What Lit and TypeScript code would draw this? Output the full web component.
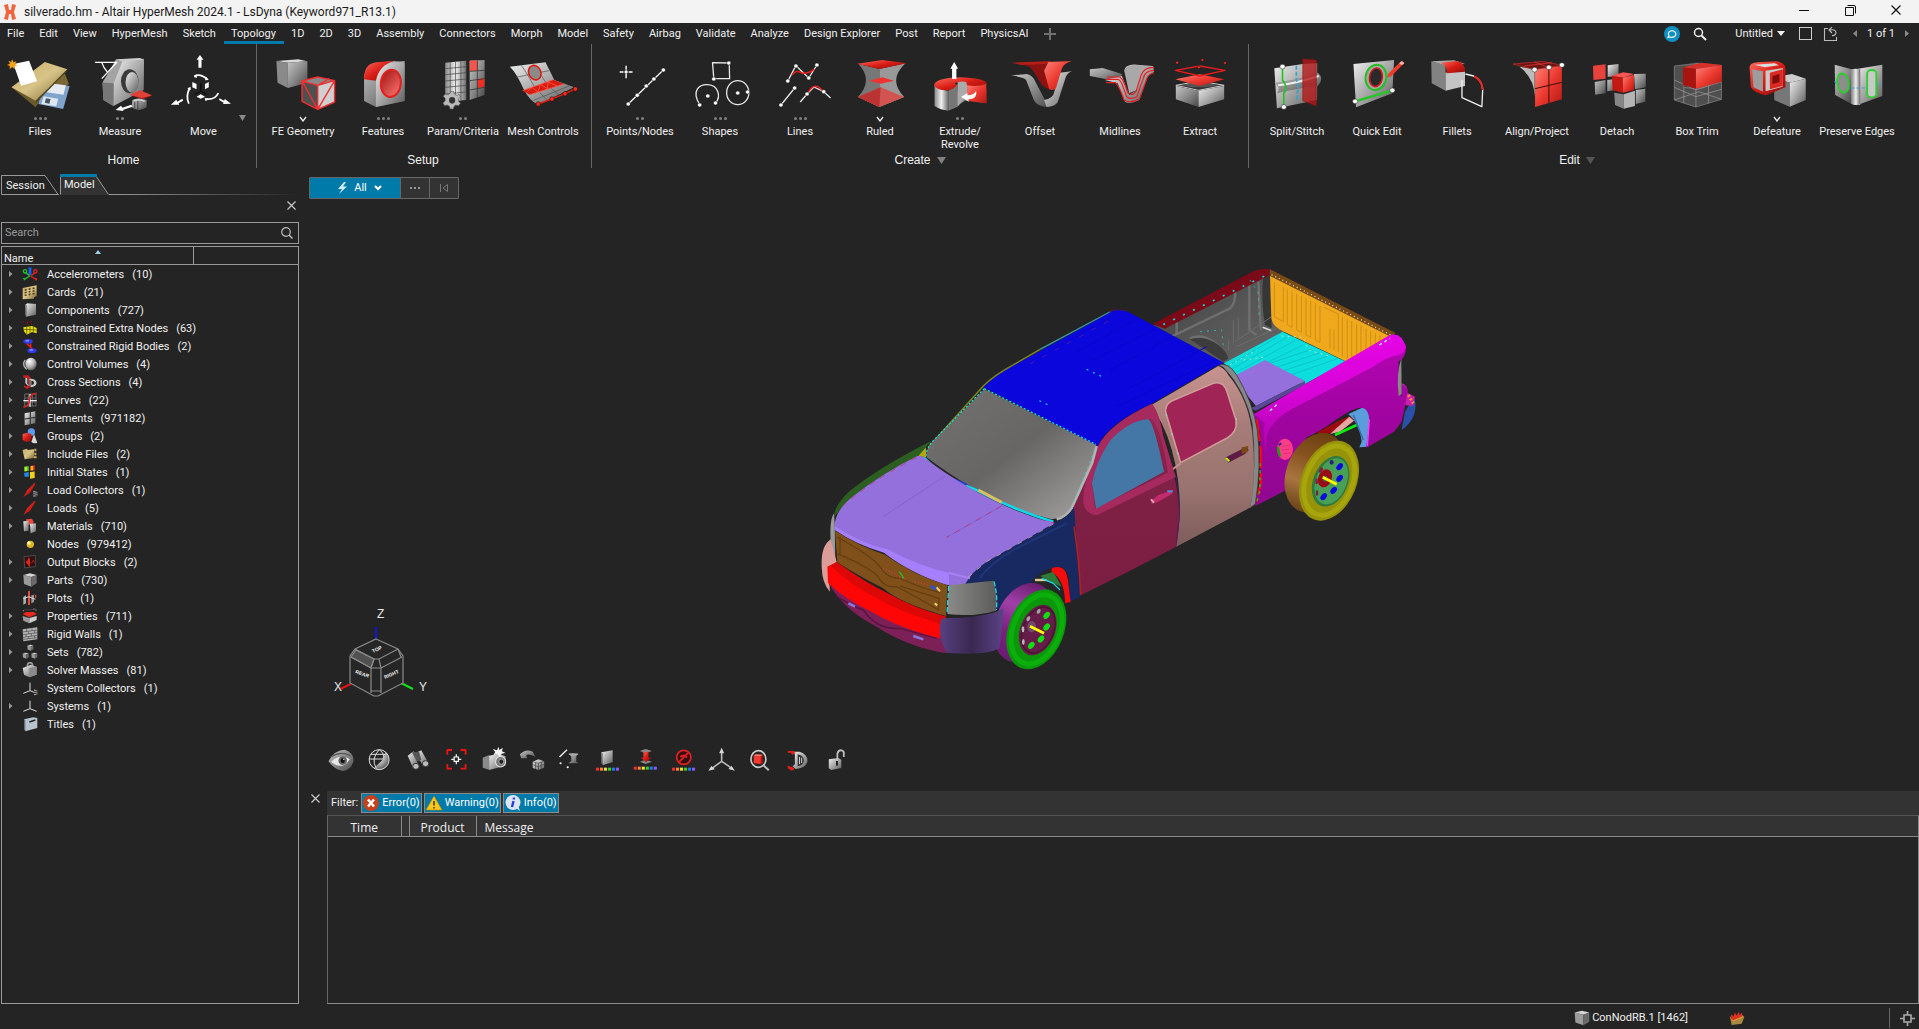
import { LitElement, html, svg, css } from "lit";
import { customElement, state } from "lit/decorators.js";
import { classMap } from "lit/directives/class-map.js";

/* ---------- small drawing helpers ---------- */
const P = (d: string, fill = "none", stroke = "none", w = 1) =>
  svg`<path d=${d} fill=${fill} stroke=${stroke} stroke-width=${w} stroke-linejoin="round" vector-effect="non-scaling-stroke"/>`;
const E = (cx: number, cy: number, rx: number, ry: number, fill = "none", stroke = "none", w = 1, rot = 0) =>
  svg`<ellipse cx=${cx} cy=${cy} rx=${rx} ry=${ry} fill=${fill} stroke=${stroke} stroke-width=${w} transform=${`rotate(${rot} ${cx} ${cy})`} vector-effect="non-scaling-stroke"/>`;
const R = (x: number, y: number, w: number, h: number, fill: string) =>
  svg`<rect x=${x} y=${y} width=${w} height=${h} fill=${fill}/>`;
const D = (d: string, stroke: string, w: number, dash: string) =>
  svg`<path d=${d} fill="none" stroke=${stroke} stroke-width=${w} stroke-dasharray=${dash} vector-effect="non-scaling-stroke"/>`;
const dots = (pts: number[][], rx = 5.5, ry = 6.5, fill = "#fff") => pts.map(([x, y]) => E(x, y, rx, ry, fill, "#111", 0.5));

const G = "url(#metal)", GV = "url(#metalV)", GD = "url(#metalD)", RD = "url(#red)", RL = "url(#redL)", TAN = "url(#tan)", SPH = "url(#sphere)";

/* ---------- ribbon artwork ---------- */
type Tool = { label: string[]; hint?: "2" | "3" | "v"; vb: string; art: unknown };

const home: Tool[] = [
  { label: ["Files"], hint: "3", vb: "0 156 209 180", art: [
    P("M30 262L50 253L105 300L93 322Z", "#6b5a2c"),
    P("M120 232L170 222L180 252L150 275Z", "#7a6834"),
    P("M118 248L182 258L165 327L100 312Z", "#7fa3cc"), P("M128 250L172 256L166 284L122 277Z", "#e6ebf2"),
    P("M114 289L152 296L147 319L108 312Z", "#dfe6ee"), P("M120 295L132 297L129 311L117 308Z", "#456"),
    P("M30 262L117 186L176 208L93 302Z", TAN), P("M93 302L176 208L173 216L94 309Z", "#544520"),
    P("M35 192L76 182L97 244L55 257Z", "#fff"),
    P("M32 178L35 187L43 184L39 192L46 197L38 198L38 208L32 201L25 208L26 198L18 195L26 191L22 182L29 186Z", "#f5a314")] },
  { label: ["Measure"], hint: "2", vb: "209 156 209 180", art: [
    P("M268 250L303 178L376 176L375 270L296 318L270 300Z", GD),
    P("M296 318L297 249L318 184L376 179L375 270Z", G),
    P("M268 247L297 250L296 318L270 300Z", "#777"), P("M268 247L306 178L320 184L297 250Z", "#a4a4a4"), P("M306 178L365 174L376 179L320 185Z", "#ccc"),
    E(339, 244, 23, 36, "#3a3a3a"), E(345, 247, 17, 31, G),
    P("M248 187H305L266 236M266 188Q271 205 280 215", "none", "#fff", 1.3),
    P("M340 284L366 271L397 287L372 298Z", RD), P("M340 284L366 271L397 286L372 294Z", "#e0403a"),
    P("M346 300Q360 291 383 300V322Q362 338 344 322Z", GD), P("M352 304V326M360 302V330", "none", "#333", 0.8), P("M350 303Q362 296 378 304", "none", "#ddd", 1.4),
    P("M302 330L316 317L320 323L343 314L346 320L322 329L322 333Z", "#fff")] },
  { label: ["Move"], vb: "426 156 209 180", art: [
    P("M520 165L529 179H524V203H516V179H511Z", "#fff"),
    P("M444 314L458 299L461 305L474 296L476 302L464 310L466 314Z", "#fff"), P("M601 311L585 297L583 302L571 295L570 300L582 308L580 312Z", "#fff"),
    P("M505 229Q520 219 538 237M491 311Q482 290 493 264M536 297Q560 300 568 279", "none", "#fff", 1.8),
    P("M511 223L504 231L512 234ZM536 230L543 240L533 241ZM487 266L495 260L496 270ZM532 292L540 300L534 303Z", "#fff"),
    P("M500 246L511 252V268L500 262ZM543 246L533 252V268L543 262ZM511 290L522 283L533 290L522 296Z", "#fff"),
    P("M522 250V273L507 283M522 273L537 283", "none", "#111", 1.4)] },
];
const setup: Tool[] = [
  { label: ["FE Geometry"], hint: "v", vb: "687 156 209 180", art: [
    P("M722 183L779 178L803 184L752 188Z", "#d8d8d8"), P("M722 183L752 188V264L725 248Z", "#8a8a8a"), P("M752 188L803 184V248L752 264Z", GD),
    P("M789 243L830 231L874 242L830 256Z", "#888"), P("M789 243L830 256V328L789 304Z", "#4f4f4f"), P("M830 256L874 242V306L830 328Z", "#d0d0d0"),
    P("M789 243L830 231L874 242L830 256ZM789 243V304L830 328L874 306V242M830 256V328L789 243M830 328L874 242M830 256L860 236", "none", "#f03030", 1.4)] },
  { label: ["Features"], hint: "3", vb: "896 156 209 180", art: [
    P("M951 230Q957 190 985 188L1030 183Q1057 185 1057 195V303L982 321L951 303Z", GD),
    P("M982 321V240Q985 200 1020 188L1057 183V303Z", G),
    P("M951 238Q950 190 985 187L1030 182Q990 195 982 242Z", RD),
    E(1021, 250, 26, 41, "url(#redHole)", "#e02020", 2, 4)] },
  { label: ["Param/Criteria"], hint: "2", vb: "1105 156 209 180", art: [
    P("M1163 188L1218 182V300L1163 306Z", GV), P("M1163 206L1218 200M1163 224L1218 218M1163 243L1218 237M1163 262L1218 256M1163 282L1218 276M1176 187V305M1190 185V303M1204 184V302", "none", "#444", 0.7),
    P("M1227 182L1266 180V285L1227 300Z", GD), P("M1227 182L1248 181V212L1227 214Z", "#f2564e"), P("M1247 238L1265 234V260L1247 264Z", "#ef2f22"),
    P("M1227 214L1266 211M1227 242L1266 236M1227 270L1266 262M1247 181V292", "none", "#333", 0.8),
    P("M1178 275L1186 275L1187 282L1194 286L1199 283L1203 291L1198 296V304L1203 310L1197 317L1190 315L1186 320L1184 327H1176L1174 319L1168 315L1162 317L1157 309L1163 303V295L1158 289L1163 282L1170 284L1175 281Z", "#b9b9b9", "#555", 0.6),
    E(1181, 301, 8, 10, "#333")] },
  { label: ["Mesh Controls"], vb: "1314 156 209 180", art: [
    P("M1332 200L1425 187Q1436 212 1448 240L1500 262L1405 314Q1385 305 1368 268Q1350 220 1332 200Z", G),
    P("M1365 272L1445 239L1474 252L1384 284Z", "#d81c10"), P("M1365 272L1445 239M1384 284L1474 252M1375 278L1390 262L1405 276L1412 253L1430 266L1432 246L1455 258", "none", "#ff5a4a", 0.8),
    P("M1348 232L1434 212M1362 196Q1380 225 1396 260M1393 190L1425 246M1394 301L1486 258M1410 278L1430 300M1440 266L1462 286", "none", "#555", 0.7),
    E(1397, 218, 16, 22, "#8a8a8a", "#e01b12", 1.6, -15),
    P("M1406 312L1442 297L1476 281L1503 267", "none", "#e01b12", 1.4), dots([[1406, 312], [1442, 297], [1476, 281], [1503, 267]], 6, 7, "#f22a18")] },
];
const create: Tool[] = [
  { label: ["Points/Nodes"], hint: "2", vb: "23 156 187 180", art: [
    P("M89 312L171 210", "none", "#fff", 1.2), dots([[89, 312], [110, 286], [131, 258], [149, 237], [171, 210]], 5, 6),
    P("M84 197V209M84 222V235M69 216H78M90 216H99", "none", "#fff", 1.4), E(84, 216, 4, 5, "#fff")] },
  { label: ["Shapes"], hint: "3", vb: "211 156 187 180", art: [
    P("M287 188L326 189L327 236H290ZM257 314C236 270 258 252 276 254C300 256 308 288 294 309", "none", "#e8e8e8", 1.3),
    E(346, 278, 26, 36, "none", "#e8e8e8", 1.3), dots([[325, 189], [290, 237], [276, 288], [257, 315], [294, 309], [346, 279], [369, 276]], 5, 6)] },
  { label: ["Lines"], hint: "3", vb: "398 156 187 180", art: [
    P("M463 243L482 197L512 234L531 195M447 315L479 264M492 306L508 282L524 261L547 275L563 294", "none", "#e8e8e8", 1.3),
    P("M473 225Q482 207 497 220Q515 220 525 207M511 276Q526 242 547 275", "none", "#e81c1c", 1.5),
    dots([[463, 243], [482, 198], [512, 234], [531, 195], [447, 315], [479, 264], [508, 282], [547, 275]], 5, 6)] },
  { label: ["Ruled"], hint: "v", vb: "585 156 187 180", art: [
    P("M628 192Q664 240 627 291L677 321V207Z", "#777"), P("M738 190Q696 240 735 291L677 321V207Z", "#999"),
    P("M653 242L684 232L711 242L680 251Z", "#e33"), P("M627 291L680 262L735 291L677 321Z", "#d25450"), P("M627 291L680 262L677 321Z", "#b33"),
    P("M625 191L684 180L741 190L677 207Z", RD)] },
  { label: ["Extrude/", "Revolve"], hint: "2", vb: "772 156 187 180", art: [
    P("M848 326V285L880 252V300L848 326Z", "#8a8a8a"), P("M880 285L927 268V310L880 302Z", "#e33a34"),
    P("M806 254V318Q820 330 838 332V272Q815 268 806 254Z", GV), P("M838 272V332L860 320V252Z", "#777"), P("M882 252L927 250V310L882 300Z", RL), P("M860 240H882V285L860 320Z", "#aaa"),
    P("M805 254Q810 235 862 232Q927 234 928 252Q905 262 882 256L880 246Q866 242 853 250L858 256Q850 272 830 271Q808 268 805 254Z", RD),
    P("M852 186L861 206H857V237H847V206H843Z", "#fff"), P("M868 291L883 279V286Q900 284 903 272Q908 296 885 298L886 305Z", "#fff")] },
  { label: ["Offset"], vb: "959 156 187 180", art: [
    P("M985 226L1022 222Q1036 226 1042 246L1064 300L1084 296L1068 321Q1045 318 1038 300L1020 240Q1016 232 985 226Z", GD),
    P("M1127 214L1098 218L1086 275Q1083 296 1062 300L1068 321Q1088 320 1094 306L1112 235Q1116 218 1127 214Z", G),
    P("M1004 192L1072 186L1062 212L1076 268Q1058 262 1052 245L1036 212Q1030 196 1004 192Z", "#8c1210"), P("M986 188L1080 183L1066 192L1010 195Z", "#b81c18"),
    P("M1072 186L1127 183Q1106 190 1102 212L1090 264Q1085 273 1074 268L1062 212Z", RL)] },
  { label: ["Midlines"], vb: "1147 156 187 180", art: [
    P("M1170 208L1200 204L1245 222L1240 245L1170 228Z", GD), P("M1252 205Q1260 192 1280 194L1318 198L1320 216Q1305 222 1300 250L1286 300Q1262 315 1252 305L1235 250L1205 240L1245 228L1262 285L1280 270Z", G),
    P("M1250 210Q1258 194 1284 195L1310 200Q1296 206 1290 225L1280 270L1262 280Z", "#a8a8a8"),
    P("M1208 238H1235Q1243 240 1248 262L1256 290Q1262 300 1280 290L1295 235Q1298 212 1320 211M1208 248H1230Q1240 262 1250 300Q1264 312 1286 296L1302 240Q1305 222 1320 219M1210 231H1240Q1250 240 1258 278Q1270 290 1278 274L1290 225Q1296 202 1320 202", "none", "#ec1c1c", 1.1)] },
  { label: ["Extract"], vb: "1334 156 187 180", art: [
    P("M1371 256L1427 243L1484 256L1424 271Z", "#333", "#ccc", 1), P("M1371 258L1424 272V321L1371 298Z", GD), P("M1484 258L1424 272V321L1484 298Z", G), P("M1380 256L1427 246L1474 256L1440 262H1410Z", "#555"),
    P("M1370 238L1427 223L1484 238L1427 258Z", RL), P("M1370 211L1427 198L1486 211L1427 228Z", "none", "#e81c1c", 1.4),
    dots([[1374, 188], [1433, 180], [1486, 189], [1425, 202]], 3.5, 4, "#ff3030")] },
];
const edit: Tool[] = [
  { label: ["Split/Stitch"], vb: "39 156 185 180", art: [
    P("M79 205L145 192L178 190V300L85 325Z", G), P("M79 248Q125 242 180 218Q195 235 180 258Q130 265 85 280Q95 262 79 248Z", GD), P("M88 256Q130 250 182 228", "none", "#eee", 2),
    P("M145 177L176 180V318L145 302Z", "#b81818c8", "#8d1010", 0.6),
    P("M98 200V240Q112 262 101 280V320", "none", "#1fc41f", 1.6), D("M130 197V240Q138 262 131 280V305", "#2aa5d8", 1.6, "4 2"), dots([[98, 200], [101, 321]], 6, 7)] },
  { label: ["Quick Edit"], vb: "224 156 185 180", art: [
    P("M262 192L356 180L352 280L268 322Z", G), E(314, 232, 24, 38, "#a8a8a8", "#22c022", 2, 5), E(314, 232, 15, 28, "#2a2a2a", "#d81c1c", 1.6, 5),
    P("M266 304L352 271", "none", "#22c822", 2.4), dots([[266, 304], [352, 271]], 6, 7), P("M342 222L372 184L379 190L350 228L340 233Z", "#ee3b2b"), P("M368 190L374 183L380 189L374 196Z", "#ffb3a8")] },
  { label: ["Fillets"], vb: "409 156 185 180", art: [
    P("M442 184L495 181L520 192L470 196Z", "#aaa"), P("M442 184L475 195V272L443 250Z", "#828282"), P("M475 218L520 212V258L475 272Z", "#c4c4c4"),
    P("M464 188L500 183Q522 188 520 215L478 220Q478 195 464 188Z", RD), P("M521 222L540 228Q558 238 561 268L559 320L513 293V240", "none", "#f0f0f0", 1.3), P("M541 229Q560 240 561 270", "none", "#e22", 2)] },
  { label: ["Align/Project"], vb: "593 156 185 180", art: [
    P("M645 200L680 208V290Q680 235 645 200Z", "#bbb"), P("M630 192L700 184L743 196L681 209Z", "#6c1414", "#d33", 0.6), P("M655 198L720 188M680 186L712 202", "none", "#f44", 0.6),
    P("M681 209L743 197V298L681 321Z", RL), P("M713 203V309M681 266L743 247", "none", "#3c0c0c", 1), dots([[680, 209], [713, 202], [743, 195]], 6, 7)] },
  { label: ["Detach"], vb: "778 156 185 180", art: [
    P("M815 197L844 193V236L816 240Z", "#e8423c"), P("M849 196L874 192V230H849Z", G), P("M819 246L844 240V280L820 284Z", GD), P("M848 240L870 236V270L848 274Z", GD),
    P("M859 227L885 217L910 222L884 233Z", "#f55"), P("M859 227L884 233V278L860 270Z", "#c41812"), P("M884 233L910 224V270L884 278Z", RL),
    P("M910 222L937 221V262L912 268Z", GD), P("M864 278L886 283V326L866 315Z", "#868686"), P("M886 283L912 272V318L886 326Z", "#b5b5b5"), P("M914 270L936 266V305L914 312Z", GD)] },
  { label: ["Box Trim"], vb: "963 156 185 180", art: [
    P("M1003 198L1053 187L1112 194V298L1053 321L1003 300Z", "#55555580"),
    P("M1003 198L1060 190L1025 205V262L1053 266L1112 245V298L1053 321L1003 300Z", "#6e6e6e60", "#888", 0.7), P("M1003 240L1053 270L1112 245M1025 262V310M1053 266V321M1003 300L1060 275L1112 298M1082 256V310M1003 262L1053 290L1112 268", "none", "#999", 0.7),
    P("M1023 202L1065 188L1113 195L1053 207Z", "#d83028"), P("M1023 202L1053 207V266L1023 255Z", "#a81410"), P("M1053 207L1113 195V245L1053 266Z", RL)] },
  { label: ["Defeature"], hint: "v", vb: "1148 156 185 180", art: [
    P("M1234 232L1275 222L1307 236L1270 248Z", "#ccc"), P("M1234 232L1270 248V320L1234 300Z", "#777"), P("M1270 248L1307 236V300L1270 320Z", G),
    P("M1177 200Q1180 188 1195 187L1240 184Q1262 190 1260 210V262Q1235 275 1215 286Q1190 280 1180 262Z", RD), P("M1183 208L1208 214V275L1186 262Z", "#9c9c9c"), P("M1214 212L1254 204V260L1214 274Z", "#c9c9c9"), P("M1188 194L1235 190L1245 196L1212 202Z", "#ddd"),
    P("M1224 218L1254 208V258L1224 268Z", "#dc2a22"), P("M1230 228L1246 222V246L1230 252Z", "#7c0d0a")] },
  { label: ["Preserve Edges"], vb: "1332 156 185 180", art: [
    P("M1373 194L1412 208V312L1374 285Z", GD), P("M1412 208L1432 208V314L1412 312Z", "#eee"), P("M1420 208L1483 194V288L1424 316Z", G), P("M1412 208Q1420 204 1432 208V312Q1420 318 1412 312Z", GV),
    D("M1373 244Q1385 275 1410 264H1440Q1470 262 1482 245", "#3aa0d8", 1.2, "3 2"), E(1392, 249, 13, 29, "#8d8d8d", "#27d327", 1.8, -6),
    svg`<rect x="1448" y="210" width="21" height="82" rx="10" fill="#c9c9c9" stroke="#27d327" stroke-width="1.8" vector-effect="non-scaling-stroke"/>`] },
];

/* ---------- model tree ---------- */
const cube = (x = 4, y = 4, s = 40) => [
  P(`M${x} ${y + s * 0.12}L${x + s * 0.5} ${y}L${x + s} ${y + s * 0.12}L${x + s * 0.6} ${y + s * 0.28}Z`, "#d4d4d4"),
  P(`M${x} ${y + s * 0.12}L${x + s * 0.6} ${y + s * 0.28}V${y + s}L${x + s * 0.05} ${y + s * 0.8}Z`, "#9a9a9a"),
  P(`M${x + s * 0.6} ${y + s * 0.28}L${x + s} ${y + s * 0.12}V${y + s * 0.75}L${x + s * 0.6} ${y + s}Z`, "#6a6a6a")];
const arrow = P("M4 46L16 24L38 2L40 6L24 32L12 40Z", RD);
const triad = P("M24 8V32L4 40M24 32L44 40", "none", "#ddd", 1);
type Row = [string, string, boolean, unknown];
const rows: Row[] = [
  ["Accelerometers", "10", true, [P("M24 4V28", "none", "#1860ff", 2.8), P("M24 30L6 40M10 20L22 28", "none", "#20c030", 1.4), E(9, 16, 5, 5, "none", "#20c030", 1.4), P("M2 36L12 36L8 44Z", "#20c030"), P("M26 30L44 42M40 20L28 28", "none", "#e02020", 1.4), E(40, 16, 5, 5, "none", "#e02020", 1.4), P("M46 36L38 36L42 46Z", "#e02020")]],
  ["Cards", "21", true, [P("M2 12L44 4V36L36 40V44L2 46Z", TAN), D("M8 18L40 12M8 26L40 20M8 34L40 28", "#4d3f18", 1.6, "2 2")]],
  ["Components", "727", true, [P("M10 8L16 4L42 6L42 38L12 44Z", G), P("M10 8L14 9V43L10 40Z", "#777")]],
  ["Constrained Extra Nodes", "63", true, [P("M4 22L30 18L44 24V40L30 36L14 44L6 34Z", "#e8e010"), P("M4 28L44 30M14 20V42M24 20V38M34 20V38", "none", "#5c5800", 0.8), dots([[4, 6], [16, 8], [28, 4], [28, 12]], 2.5, 2.5, "#f22")]],
  ["Constrained Rigid Bodies", "2", true, [P("M14 16L30 32M26 16V28", "none", "#e02020", 1.6), E(18, 10, 14, 7, "#3038e8"), E(30, 38, 14, 7, "#3038e8"), E(16, 8, 6, 3, "#8088ff"), E(28, 36, 6, 3, "#8088ff")]],
  ["Control Volumes", "4", true, [E(27, 24, 17, 19, SPH), P("M10 12Q-2 26 14 40", "none", "#aaa", 1.5)]],
  ["Cross Sections", "4", true, [P("M4 4H20L26 12V38L16 46L6 40V34L14 38L18 32V12H4Z", "#c02020"), P("M10 12H16V30L22 34V14H28Q44 16 44 28Q42 38 26 40V34Q36 32 36 26Q36 20 28 20V36L16 34L10 28Z", "#c8c8c8"), P("M24 18V36", "none", "#333", 1)]],
  ["Curves", "22", true, [P("M8 6H42V42H8ZM8 18H42M8 30H42M19 6V42M31 6V42", "none", "#777", 0.8), P("M24 6V44M4 26H44", "none", "#eee", 1.3), P("M4 46Q22 42 22 24Q24 6 44 4", "none", "#e02020", 1.5)]],
  ["Elements", "971182", true, [P("M8 10L40 4V40L8 46Z", G), P("M25 6V44M8 27L40 22", "none", "#333", 1.2)]],
  ["Groups", "2", true, [E(28, 12, 11, 11, "#5a9ae8"), P("M2 18L16 14L28 18V38L14 42L2 36Z", RD), P("M36 18L46 44Q36 48 28 42Z", "#d8d8d8")]],
  ["Include Files", "2", true, [P("M2 12L14 8L18 12L36 10V36L8 40L2 14Z", TAN), P("M40 8V16M40 20V28M44 34H36", "none", "#c8ac58", 2)]],
  ["Initial States", "1", true, [P("M6 8L22 6V22L6 24Z", "#40c828"), P("M24 6L38 4V20L24 22Z", "#ef3818"), P("M6 26L22 24V38L8 38Z", "#2088f0"), P("M24 24L38 22V42L24 44Z", "#f0d018"), P("M12 8V24M30 6V20", "none", "#f8e030", 1.6), P("M22 4V44M6 24L40 20", "none", "#222", 1)]],
  ["Load Collectors", "1", true, [arrow, P("M34 26L46 30V42L34 44Z", "#aaa"), P("M34 32L46 34M34 38L46 40", "none", "#222", 1)]],
  ["Loads", "5", true, [arrow]],
  ["Materials", "710", true, [P("M12 4L30 2L34 10V20L14 20Z", "#e84a40"), P("M4 10L20 8V38L6 40Z", G), P("M24 18L42 16V40L26 46Z", G)]],
  ["Nodes", "979412", false, [E(25, 25, 11, 11, "#d8b820"), E(21, 21, 5, 5, "#fff8b0")]],
  ["Output Blocks", "2", true, [P("M6 8L40 4V38L8 42Z", "#301010", "#555", 0.8), P("M10 24L16 20L20 10L24 16V40L18 32Z", "#e02818"), P("M26 26H30L34 18L38 26", "none", "#a02018", 1)]],
  ["Parts", "730", true, cube()],
  ["Plots", "1", false, [P("M4 20L12 16V40L4 44Z", "#aaa"), P("M18 4L24 2V44L18 46Z", "#e84a40"), P("M28 16L36 14V36L28 40Z", "#999"), P("M38 12L44 18L40 28Z", "#e84a40"), P("M4 26L20 20L40 28", "none", "#ddd", 1)]],
  ["Properties", "711", true, [P("M2 24L22 30V46L4 38Z", "#999"), P("M22 30L44 24V36L22 46Z", "#ccc"), P("M2 18L12 12H36L44 18L22 28Z", "#e82820"), P("M6 6L42 4", "none", "#444", 1), dots([[4, 8], [42, 6], [36, 3]], 2, 2)]],
  ["Rigid Walls", "1", true, [P("M2 10L46 4V40L4 46Z", "#b4b4b4"), P("M2 18L46 12M3 26L46 20M3 34L46 28M4 40L46 35M14 9V17M30 7V14M20 16V24M38 13V21M12 25V33M28 23V30M20 32V38M38 29V36", "none", "#555", 0.8)]],
  ["Sets", "782", true, [cube(16, 2, 18), cube(2, 26, 18), cube(28, 26, 18)]],
  ["Solver Masses", "81", true, [P("M16 12Q16 2 24 2Q32 2 32 12", "none", "#999", 1.6), P("M2 18L26 8L44 14V38L22 46L6 38Z", G), P("M22 18L44 14V38L22 46Z", "#8a8a8a")]],
  ["System Collectors", "1", false, [triad, P("M36 28L46 32V44L36 46Z", "#aaa"), P("M36 34L46 36M36 40L46 42", "none", "#222", 1)]],
  ["Systems", "1", true, [triad]],
  ["Titles", "1", false, [P("M6 10L34 4L46 6V36L10 46Z", "#b8c4cc"), P("M6 10L10 12V46L6 40Z", "#66727c"), P("M22 18L40 12", "none", "#222", 1.4)]],
];

/* ---------- view toolbar ---------- */
const rainbow = (x: number, y: number) => ["#f0302c", "#f58a2c", "#f2e02c", "#3ad02c", "#1c7cf0", "#8a5cf6"].map((c, i) => R(x + i * 11.2, y, 8.5, 9, c));
const viewTools: [string, unknown][] = [
  ["Visibility", [P("M52 484Q70 450 98 450Q124 460 122 485Q115 512 92 514Q66 508 52 484Z", GD), P("M60 486Q82 462 112 478Q100 500 86 498Q70 498 60 486Z", "#e8e8e8"), E(92, 483, 12, 13, "#666"), E(92, 483, 6, 7, "#111"), E(95, 479, 2, 2, "#fff"), P("M58 472Q85 452 114 468", "none", "#555", 1.2)]],
  ["Shading", [E(194, 480, 28, 30, SPH), P("M166 480A28 30 0 0 1 212 456L204 480L180 505A28 30 0 0 1 166 480Z", "#262626"), E(194, 480, 28, 30, "none", "#ddd", 1), P("M166 478H204M194 450Q170 478 186 506M194 450Q212 462 204 480M170 464H214", "none", "#ddd", 1)]],
  ["Find", [P("M274 468L290 455L303 495L290 508Z", G), P("M296 460L312 452L332 490L318 500Z", G), E(297, 500, 9, 9, "#bbb", "#333", 1), E(324, 492, 9, 9, "#bbb", "#333", 1), P("M286 458L306 456L312 480L300 486Z", "#555")]],
  ["Fit view", [P("M385 465V451H398M422 451H436V465M436 493V507H422M398 507H385V493", "none", "#f01414", 1.8), P("M410 464V472M410 486V494M396 479H403M417 479H424", "none", "#fff", 1.2), svg`<rect x="404" y="472" width="12" height="13" fill="none" stroke="#fff" stroke-width="1.2" vector-effect="non-scaling-stroke"/>`]],
  ["Capture", [P("M484 474L502 466V510L484 504Z", "#8a8a8a"), P("M502 468L530 462L548 470V498L502 511Z", G), E(534, 486, 14, 16, "#777", "#ddd", 1.2), E(536, 486, 7, 8, "#222", "#aaa", 1), P("M528 441L531 451L540 444L538 455L548 460L537 462L532 472L525 464L514 466L519 457L512 448L524 452Z", "#f4f4f4")]],
  ["Convert", [P("M588 464Q604 446 624 456L632 472Q614 462 606 466L608 476H592Z", GD), P("M624 486L640 479L656 485V504L640 511L624 505Z", G), P("M640 491V511M624 495L640 501L656 494M632 489V508M648 488V508M624 486L640 491L656 485", "none", "#444", 0.7)]],
  ["Geometry", [P("M699 472L720 450", "none", "#eee", 1.4), E(702, 491, 3, 3, "#eee"), E(722, 503, 3, 3, "#fff"), P("M724 462H752L746 470V486L754 491H724L732 484V470Z", GD), E(738, 464, 13, 3, "#aaa")]],
  ["Color mode", [P("M816 458L848 452V488L820 496Z", G), P("M816 458L820 460V496L816 490Z", "#777"), rainbow(801, 504)]],
  ["Color by property", [P("M924 454L940 448L958 454L940 461Z", "#888"), P("M924 486L940 480L958 486L940 493Z", "#888"), P("M934 456H948V474H956L941 488L928 474H934Z", RD), rainbow(907, 501)]],
  ["Color off", [E(1047, 473, 20, 21, "#301010", "#e02020", 1.8), P("M1033 488L1060 458M1037 472Q1047 462 1056 474", "none", "#e02020", 1.8), rainbow(1014, 504)]],
  ["Coordinate system", [P("M1153 455V485L1126 506M1153 485L1182 506", "none", "#bbb", 1.6), P("M1153 444L1160 461H1146ZM1116 513L1124 499L1134 509ZM1190 513L1181 499L1172 508Z", "#d8d8d8")]],
  ["Isolate", [E(1256, 478, 21, 25, "#262626", "#ccc", 1.6), P("M1243 469L1248 464L1268 465V490L1262 494L1243 490Z", "#b81410"), P("M1243 470H1262V493L1243 490Z", "#f03a30"), P("M1243 469L1248 464L1268 465L1262 470Z", "#ff7a70"), P("M1270 497L1285 512", "none", "#bbb", 2)]],
  ["Section cut", [P("M1352 456H1372Q1395 464 1393 486Q1388 506 1360 508L1352 500L1358 494V464Z", G), P("M1366 464Q1385 470 1383 484Q1380 498 1366 500Z", "#333"), P("M1371 472V493M1377 474V490", "none", "#ccc", 1), P("M1338 454L1352 453L1360 460L1352 465L1346 459H1338Z", "#e02020"), P("M1338 498L1350 502L1358 507L1350 513L1338 506Z", "#e02020")]],
  ["Unlock", [P("M1477 478V462Q1480 450 1489 452Q1497 454 1495 464V472", "none", "#bbb", 1.8), P("M1453 479L1480 475L1488 480V505L1460 511L1453 506Z", G), P("M1476 484V498", "none", "#222", 2)]],
];

/* ---------- 3D model ---------- */
const holes = (pts: number[][], fill: string) => pts.map(([x, y]) => E(x, y, 8, 12, fill, "none", 0, 40));
const truck = svg`
<g transform="translate(800 250) scale(0.33333)">
 <g transform="translate(870 0)">
  ${P("M680 548L740 515L775 500L790 505L735 545L700 555Z", "#9c0a10")}
  ${P("M720 552L778 500L792 512L750 545Z", "#e6a6a2")}
  ${P("M735 555L800 525", "none", "#0cf00c", 2.6)}
  ${P("M190 225L470 88L540 62L545 215L585 245L405 342Z", "url(#bed)")}
  ${P("M435 112Q440 170 410 180L240 262M478 100V240L500 255M505 95L512 240M260 210V255M300 265Q360 240 412 325", "none", "#6f6f6f", 2.4)}
  ${P("M300 268Q345 255 385 285Q410 305 415 325L400 335Z", "#3c3c3c")}
  ${P("M520 75Q512 150 525 225L545 235L540 70Z", "#363636")}${P("M518 232L545 242", "none", "#ddd", 1.6)}
  ${P("M435 275L545 200M440 290L560 235M415 300V270M430 210V280M445 205V270", "none", "#6c6c6c", 1)}
  ${P("M188 222L470 74Q510 50 540 58L538 76L240 228L225 236Z", "#7a0a18")}
  ${P("M540 58L915 248L905 268L540 84Z", "#7a4a16")}
  ${P("M540 78L905 262L770 335L582 245Q546 230 544 205Z", "#f0a81c")}
  ${P("M553 98V200L580 215V110M592 117V225L606 232V124M620 131V240L634 247V138M648 145V255L662 262V152M676 160V270L690 277V167M702 172L745 192V305M720 235V295M732 238V300M757 200V320M772 208V325M785 213V320M800 222V315M813 226V308M828 236V300M842 244V292M856 250V285M870 256V278", "none", "#c88a14", 0.8)}
  ${D("M545 74L905 256", "#d8ecc8", 1.2, "1 3")}
  ${P("M578 245L768 335L645 402L440 376L402 340Z", "#0cdede")}
  ${P("M410 350L560 262M425 358L590 262M440 366L615 272M460 372L640 285M540 340L665 298M560 352L690 308M580 362L715 318M605 374L745 325", "none", "#0cc4c8", 1)}
  ${D("M575 258L640 262L655 300L715 318M420 345L500 300M460 330L520 322", "#a0e8c0", 1, "2 4")}${D("M330 245L395 240L400 290M480 90L505 130L508 210", "#30c8c8", 0.8, "2 5")}
  ${D("M190 238L540 70", "#20d8e0", 1.6, "2 9")}
  ${P("M437 376L525 330L645 393L498 468L475 440Z", "#9370db")}${P("M498 468L645 393V405L498 482L480 475Z", "#5b479a")}
  ${P("M945 485L972 440Q990 500 935 540Z", "#2a50a8")}${P("M935 400Q955 405 952 428L975 440L970 468L945 465Z", "#c820a8")}${D("M955 435L970 460", "#ff9040", 3, "2 2")}
  ${P("M775 492L820 472Q838 480 838 500L836 590L808 592L815 575Q810 520 775 492Z", "#5a9cdc")}${P("M790 495L820 570", "none", "#3a6ea8", 1.5)}
  ${P("M488 494L555 462L895 258Q930 240 948 290Q948 322 926 335V430L935 440V405Q955 408 952 428L945 470L935 515L912 545L828 594L838 520Q838 475 815 473C770 475 725 528 650 562Q628 600 618 660L605 712L500 766L486 766L512 700L510 545Z", "url(#bedside)")}
  ${P("M488 494L895 258Q930 240 948 290Q945 308 925 315Q890 320 850 350L600 480Q540 515 530 560L528 610Q515 540 525 522L505 500Z", "url(#bedrail)")}
  ${P("M838 508L832 588", "none", "#ff3cff", 1.4)}
  ${P("M934 325Q918 370 926 438L935 432Z", "#8a8a8a")}
  ${D("M868 285L900 265M540 482L560 464", "#9cf0f0", 1.4, "3 3")}
  ${E(585, 598, 24, 32, "#ff3c88")}${P("M563 590L570 620", "none", "#10a010", 2.4)}${P("M566 585L574 580", "none", "#102890", 2)}${P("M575 590L600 585M575 600L605 597M580 612L602 608", "none", "#e03078", 1)}
  ${E(675, 668, 85, 124, "url(#tyreBrown)", "none", 0, 22)}
  ${E(717, 692, 83, 125, "#96920a", "none", 0, 22)}${E(718, 692, 70, 108, "none", "#a8a40c", 5, 22)}
  ${E(722, 694, 52, 79, "#2f7a3c", "none", 0, 22)}${E(724, 694, 46, 72, "#48a058", "none", 0, 22)}
  ${holes([[749, 650], [749, 685], [731, 721], [701, 740]], "#0a0ae0")}${E(725, 637, 6, 7, "#2a2080")}${E(693, 660, 5, 9, "#8a1c3c", "none", 0, 30)}${E(680, 694, 4, 9, "#8a1c3c")}${E(681, 729, 4, 9, "#702a3c")}
  ${E(705, 685, 20, 28, "#9c0c18", "none", 0, 22)}${E(706, 686, 7, 9, "#307040")}${P("M698 682L740 703", "none", "#ffff00", 2.8)}
  ${D("M500 508L512 600V700L500 755", "#ff0808", 2.2, "22 5")}${D("M510 640V720L500 758", "#40b020", 1.4, "3 4")}
  ${P("M385 345Q415 335 440 375Q490 460 502 540Q515 650 496 762L480 774Q500 640 486 520Q465 420 400 352Z", "#848886", "#4a3040", 0.8)}
  ${P("M183 466L385 348Q405 355 415 375Q478 450 488 560Q498 680 482 772L256 892Q278 800 264 690Q250 590 215 520Z", "url(#rdoor)")}
  ${P("M228 490Q222 465 245 453L370 400Q398 392 410 422L438 510Q444 545 410 565L272 638Z", "#a02456", "#cf9c98", 1.6)}
  ${P("M272 640L245 660", "none", "#c88e8a", 2)}
  ${P("M407 622L470 590L476 600L465 612L415 638Z", "#5e1c44")}${P("M455 592L475 588L472 606L455 612Z", "#7a4a16")}${P("M408 624L418 634", "none", "#b0f010", 2)}
  ${D("M228 492L272 638M440 510L418 455", "#7ae8e8", 0.8, "2 18")}
 </g>
 ${P("M820 770Q850 690 893 590Q930 520 1055 462Q1075 480 1090 560Q1134 690 1138 790Q1138 860 1126 892L990 962L842 1036Z", "url(#fdoor)")}
 ${P("M893 590Q930 520 1055 462Q1075 480 1090 560Q1112 630 1122 665L1104 668Q1080 520 1050 506Q990 510 930 575Q885 640 876 700L885 775L1120 660L1128 680L890 796Q850 790 850 750Q850 690 893 590Z", "#a62a5e")}
 ${P("M876 700Q885 640 930 572Q985 512 1045 507Q1062 518 1092 665L888 776Z", "#4577a6")}
 ${P("M1053 752L1075 735L1118 720L1116 732L1075 755L1055 762Z", "#c22a6c")}${P("M1053 748L1062 758", "none", "#e8b0a8", 2)}${P("M1102 724H1118", "none", "#5090e0", 2)}
 ${P("M1128 680Q1140 760 1138 800L1128 892", "none", "#4a1a6a", 0.8)}
 ${P("M385 592L550 408Q580 378 640 345L720 298", "none", "#7c8420", 1.6)}${P("M720 298L935 183", "none", "#3a9a9a", 1.4)}${P("M925 186Q945 174 985 182L960 190Z", "#4a1a50")}
 ${P("M550 412Q580 380 640 347L935 185Q955 176 985 186L1272 338L1245 350L1058 460Q925 520 893 588Z", "#0a06dc")}
 ${P("M770 290L930 205M830 305L1000 215M880 330L1060 240M930 360L1110 262M980 420L1220 290M950 470L1250 330", "none", "#0905ca", 1)}
 ${D("M690 342L940 205", "#5a2498", 0.8, "5 9")}${D("M718 452L755 470M860 358L910 382", "#20d0f0", 1.2, "2 5")}
 ${P("M553 418L888 585L875 640L820 765Q800 805 755 808Q560 760 380 622Q374 600 400 572Z", "url(#glass)")}
 ${D("M553 416L400 572Q375 600 378 625M553 416L888 583", "#18e8e8", 1.2, "2 2")}
 ${P("M370 622Q440 690 520 716Q640 780 760 815", "none", "#10d8e8", 2.6)}${P("M450 684L500 704", "none", "#2040d0", 2.4)}${P("M535 720L605 757", "none", "#d8c060", 3)}${P("M350 618L378 590V622Z", "#b0a810")}${P("M352 620L366 630M740 815L762 820", "none", "#f020d0", 1.8)}${P("M380 632L415 660", "none", "#8a1818", 2)}
 ${P("M890 588L876 640L815 775Q800 800 770 808", "none", "#b4b4b2", 2.6)}${D("M884 600L820 760", "#30e0e0", 0.8, "2 4")}
 ${P("M395 572Q240 650 150 722Q103 765 102 800L118 782Q200 705 352 622Z", "#2c5e22")}
 ${P("M102 790Q88 810 92 870L106 940L104 820Z", "#9a9a9a")}
 ${P("M92 868Q62 888 65 950Q66 1000 90 1025L84 950L110 936Z", "#dc9c98")}
 ${P("M86 1000Q200 1085 425 1160L440 1210Q320 1190 230 1130Q130 1080 86 1000Z", "#7e2058")}${P("M110 1040Q170 1075 190 1080Q230 1140 300 1135L410 1165", "none", "#5a1440", 1.4)}${P("M145 1060L165 1070M340 1158L370 1168", "none", "#8a78e0", 2.4)}
 ${P("M490 1006Q510 965 560 932Q640 885 760 820Q808 800 822 770L842 1040L805 1058L808 990Q800 945 765 952Q715 965 690 1003Q630 1030 612 1075L588 1080L583 990Z", "#182860")}
 ${P("M540 985Q560 950 640 900L800 820", "none", "#20357a", 2)}
 ${P("M822 830Q838 930 842 1035", "none", "#b02020", 1.6)}
 ${P("M690 1005Q715 965 765 952L790 1040L700 1030Z", "#262626")}${P("M705 990L745 990", "none", "#e0c890", 2.4)}${P("M720 978L760 965L785 1010L760 1000Z", "#2e7a38")}${P("M725 985L760 1000L780 1020", "none", "#20d8e8", 1.2)}
 ${P("M755 955Q795 940 803 985L812 1056L795 1060Q795 990 755 965Z", "#f40c0c")}
 ${E(672, 1118, 85, 124, "url(#tyrePurple)", "none", 0, 22)}
 ${E(709, 1138, 83, 125, "#0a980a", "none", 0, 22)}${E(710, 1138, 70, 108, "none", "#0cae0c", 5, 22)}
 ${E(713, 1140, 52, 79, "#661c48", "none", 0, 22)}${E(715, 1140, 46, 72, "none", "#4c1236", 1.4, 22)}
 ${holes([[740, 1096], [740, 1131], [723, 1167], [694, 1186]], "#10e010")}${E(716, 1084, 5, 8, "#a0a0a0", "none", 0, 30)}${E(685, 1106, 5, 8, "#b0a0b0", "none", 0, 30)}${E(669, 1138, 4, 9, "#b8b8b8")}${E(670, 1176, 4, 9, "#b8b8b8")}
 ${E(695, 1130, 13, 17, "#70486c")}${P("M690 1129L732 1150", "none", "#ffff00", 2.8)}
 ${P("M352 618Q250 668 160 738Q100 785 104 836Q200 890 252 905Q340 975 445 1006L494 1004Q515 965 560 935L762 820Q560 765 365 618Z", "#9370db")}
 ${P("M104 828Q180 880 262 898Q360 950 446 968L448 1006Q330 970 252 908Q170 885 104 840Z", "#a680fc")}
 ${P("M445 968L510 985", "none", "#a680f4", 2)}${P("M435 678L250 800M605 768L440 862", "none", "#8462cc", 1)}${D("M605 768L440 862M350 622Q200 700 120 775", "#c03070", 0.7, "6 6")}
 ${D("M760 822L560 935L500 985", "#e0b0b0", 0.7, "5 7")}
 ${P("M105 842Q180 890 255 914Q340 975 442 1006L438 1098Q300 1060 250 1015Q170 975 112 937Z", "#80501a")}
 ${P("M112 862Q230 925 250 965Q270 985 300 985Q350 1010 420 1028M110 910Q230 960 240 990Q260 1015 290 1010Q350 1040 415 1080L417 1045L300 1008M120 860V915", "none", "#623e10", 1.2)}
 ${D("M250 955L320 990M345 995L385 1005", "#c04040", 2, "1 2")}${P("M298 965L312 985", "none", "#20c020", 1.4)}${P("M392 1008L408 1018", "none", "#3050d0", 3)}${P("M410 1012L420 1024M404 1060L412 1066", "none", "#e8d070", 2)}
 ${P("M110 937Q190 995 262 1030Q340 1075 438 1100L420 1165Q300 1135 220 1088Q130 1045 84 998L82 950Z", "#fe0606")}${P("M110 937Q190 995 262 1030Q340 1075 438 1100L432 1125Q300 1085 240 1050Q150 1005 92 948Z", "#dc0808")}
 ${P("M425 1105Q560 1105 612 1075L598 1195Q560 1218 440 1208Q408 1150 425 1105Z", "url(#corner)")}
 ${P("M447 1006L580 992Q594 1040 588 1082Q520 1102 442 1092Z", "url(#lamp)")}${D("M446 1008L441 1090M582 994Q594 1040 589 1080", "#20e8e8", 1.2, "5 2")}
</g>`;

const gizmo = svg`
<g fill="none" stroke="#8a8a8a" stroke-width="1.2">
 <path d="M376 627V640" stroke="#1414e0" stroke-width="2"/><path d="M351 684L340 689" stroke="#e01414" stroke-width="2"/><path d="M401 683L413 689" stroke="#14e014" stroke-width="2"/>
 <path d="M376 639L398 649L403 656V683L378 696H374L350 683V656L355 649Z" fill="#262626"/>
 <path d="M351 657L356 650L374 659L371 668Z" fill="#505050"/>
 <path d="M355 649L374 659H379L398 649M351 657L371 668H381L402 657M371 668V693M381 668V693M374 659L371 668M379 659L381 668M398 649L401 657M371 691H381"/>
</g>
<g class="axes"><text x="377" y="618">Z</text><text x="334" y="691">X</text><text x="419" y="691">Y</text></g>
<g class="faces"><text x="355" y="673" transform="rotate(20 355 673)">REAR</text><text x="385" y="679" transform="rotate(-24 385 679)">RIGHT</text><text x="373" y="653" transform="rotate(-24 373 653)">TOP</text></g>`;

const grad = (id: string, stops: string[], x2 = 1, y2 = 1) => svg`<linearGradient id=${id} x1="0" y1="0" x2=${x2} y2=${y2}>${stops.map((c, i) => svg`<stop offset=${i / (stops.length - 1)} stop-color=${c}/>`)}</linearGradient>`;

const menus = ["File", "Edit", "View", "HyperMesh", "Sketch", "Topology", "1D", "2D", "3D", "Assembly", "Connectors", "Morph", "Model", "Safety", "Airbag", "Validate", "Analyze", "Design Explorer", "Post", "Report", "PhysicsAI"];

@customElement("app-root")
export class AppRoot extends LitElement {
  @state() private menu = "Topology";

  static styles = css`
    :host { display: flex; flex-direction: column; height: 100vh; background: #242424; color: #f0f0f0; overflow: hidden;
      font: 11px/16px Roboto, "Liberation Sans", sans-serif; }
    * { box-sizing: border-box; }
    button { all: unset; box-sizing: border-box; cursor: default; white-space: nowrap; }
    svg { display: block; flex: none; }
    .defs { width: 0; height: 0; position: absolute; }
    .title { display: flex; align-items: center; height: 23px; background: #f3f3f3; color: #1a1a1a; font: 12px/16px Roboto, sans-serif; padding-left: 4px; gap: 8px; flex: none; }
    .title h1 { font: inherit; margin: 0; flex: 1; }
    .win { display: flex; align-self: flex-start; }
    .win button { width: 46px; height: 20px; display: grid; place-items: center; }
    .menubar { display: flex; align-items: stretch; height: 21px; flex: none; }
    .menubar nav { display: flex; flex: 1; }
    .menubar nav button { padding: 3px 8px 0 7px; border-bottom: 3px solid transparent; }
    .menubar nav button.on { border-color: #007aa8; }
    .right { display: flex; align-items: center; padding-right: 10px; }
    .right button { display: flex; align-items: center; gap: 4px; }
    .right .chat { margin-right: 13px; } .right .find { margin-right: 28px; } .right .doc { margin-right: 14px; } .right .sq { margin-right: 10px; }
    .right .share { margin-right: 15px; }
    .right .pages { margin: 0 10px; }
    .ribbon { display: flex; height: 124px; flex: none; }
    .group { display: flex; flex-direction: column; padding: 8px 8px 0; border-right: 1px solid #666; }
    .group.first { padding: 8px 9px 0 0; }
    .group.second { padding: 8px 8px 0 6px; }
    .group.last { border: 0; }
    .tools { display: flex; }
    .tool { width: 80px; display: flex; flex-direction: column; align-items: center; text-align: center; line-height: 13px; }
    .first .tool:last-child { width: 87px; }
    .hint { height: 13px; display: flex; align-items: center; justify-content: center; gap: 2px; }
    .hint i { width: 3px; height: 3px; border-radius: 2px; background: #808080; }
    .tool span { display: block; }
    .cap { margin-top: auto; height: 16px; display: flex; align-items: center; justify-content: center; gap: 6px; font: 12px/16px "Liberation Sans", sans-serif; }
    .rowed { display: flex; align-items: flex-start; }
    .more { width: 8px; height: 6px; margin-top: 63px; margin-left: -8px; }
    .work { flex: 1; min-height: 0; display: grid; grid-template-columns: 303px minmax(0, 1fr); }
    .side { display: flex; flex-direction: column; padding: 6px 4px 0 1px; min-height: 0; }
    .tabs { display: flex; height: 21px; align-items: flex-end; }
    .tab { position: relative; height: 20px; width: 58px; }
    .tab.on { height: 21px; width: 50px; }
    .tab svg { position: absolute; inset: 0; }
    .tab span { position: relative; padding-left: 5px; line-height: 22px; }
    .rule { flex: 1; height: 1px; background: linear-gradient(90deg, #999, #24242400); }
    .closeRow { height: 27px; display: flex; align-items: center; justify-content: flex-end; padding: 0 3px 6px 0; }
    .search { display: flex; align-items: center; height: 22px; border: 1px solid #999; padding: 0 5px 0 3px; flex: none; }
    .search input { all: unset; flex: 1; min-width: 0; color: #e8e8e8; }
    .search input::placeholder { color: #999; }
    .tree { margin-top: 2px; border: 1px solid #999; flex: 1; min-height: 0; }
    .thead { display: flex; height: 18px; border-bottom: 1px solid #999; position: relative; line-height: 23px; padding-left: 2px; }
    .thead span { width: 190px; border-right: 1px solid #999; height: 17px; }
    .thead svg { position: absolute; left: 93px; top: 3px; }
    ul { list-style: none; margin: 0; padding: 0; }
    li { display: flex; align-items: center; height: 18px; line-height: 18px; }
    li .exp { width: 20px; height: 18px; padding-left: 7px; display: flex; align-items: center; flex: none; }
    li b { font-weight: normal; margin: 0 8px 0 9px; white-space: nowrap; }
    li b, li .count { padding-top: 1px; }
    .main { display: grid; grid-template-rows: minmax(0, 1fr) 213px; min-height: 0; }
    .view { display: flex; flex-direction: column; padding: 9px 0 14px; min-height: 0; }
    .sel { display: flex; margin-left: 6px; height: 22px; flex: none; border: 1px solid #666; align-self: flex-start; border-radius: 1px; }
    .sel button { display: flex; align-items: center; justify-content: center; background: #333; }
    .sel .all { width: 90px; background: #007aa8; gap: 7px; color: #fff; padding-left: 10px; }
    .sel .sm { width: 29px; border-left: 1px solid #666; }
    .scene { flex: 1; min-height: 0; width: 100%; }
    .axes text { font: 12px "Liberation Sans", sans-serif; fill: #e8e8e8; }
    .faces text { font: bold 5px "Liberation Sans", sans-serif; fill: #f4f4f4; }
    .bar { display: flex; padding-left: 19px; flex: none; }
    .log { display: grid; grid-template-columns: 24px minmax(0, 1fr); grid-template-rows: 24px minmax(0, 1fr); }
    .log .x { align-self: start; padding: 3px 0 0 8px; }
    .filter { display: flex; align-items: center; background: #333; padding-left: 4px; gap: 2px; }
    .filter button { display: flex; align-items: center; gap: 3px; height: 20px; padding: 0 1px; border: 1px solid #8a8a8a; background: #007aa8; color: #fff; }
    .filter label { margin-right: 1px; }
    .grid { grid-column: 2; border: 1px solid #8a8a8a; border-left-color: #666; border-top-color: #555; }
    table { width: 100%; border-collapse: collapse; table-layout: fixed; font: 12px/15px "Open Sans", sans-serif; }
    th { font-weight: normal; background: #333; height: 20px; padding: 3px 8px 0; border-right: 1px solid #8a8a8a; border-bottom: 1px solid #8a8a8a; text-align: center; }
    th:last-child { border-right: 0; text-align: left; }
    th.time { width: 73px; padding: 3px 0 0; } th.gap { width: 8px; padding: 0; } th.prod { width: 67px; padding: 3px 0 0; }
    .status { height: 25px; flex: none; display: flex; align-items: center; justify-content: flex-end; padding-top: 3px; }
    .status .item { display: flex; align-items: center; gap: 2px; margin-right: 41px; }
    .status .fire { margin-right: 144px; }
    .status .snap { border-left: 1px solid #666; height: 20px; width: 30px; padding-left: 10px; display: flex; align-items: center; }
  `;

  private hint(h?: string) {
    if (h === "v") return html`<div class="hint"><svg width="8" height="6" viewBox="0 0 8 6"><path d="M1 1L4 5L7 1" fill="none" stroke="#eee" stroke-width="1.3"/></svg></div>`;
    return html`<div class="hint">${Array.from({ length: Number(h ?? 0) }, () => html`<i></i>`)}</div>`;
  }
  private tool(t: Tool) {
    return html`<button class="tool"><svg width="80" height="60" viewBox=${t.vb} preserveAspectRatio="none" aria-hidden="true">${t.art}</svg>${this.hint(t.hint)}${t.label.map((l) => html`<span>${l}</span>`)}</button>`;
  }
  private down(fill: string) {
    return html`<svg width="9" height="7" viewBox="0 0 9 7"><path d="M0 0H9L4.500 7Z" fill=${fill}/></svg>`;
  }
  private cross(c: string, s = 9) {
    return html`<svg width=${s} height=${s} viewBox="0 0 9 9"><path d="M.5 .5L8.500 8.500M8.500 .5L.5 8.500" fill="none" stroke=${c} stroke-width="1.1"/></svg>`;
  }

  render() {
    return html`
      <svg class="defs" aria-hidden="true"><defs>
        ${grad("metal", ["#f0f0f0", "#a8a8a8", "#5c5c5c"])}${grad("metalV", ["#8a8a8a", "#f0f0f0", "#6a6a6a"], 1, 0)}${grad("metalD", ["#c4c4c4", "#8a8a8a", "#474747"])}
        ${grad("red", ["#ff6a60", "#d81c14", "#8c0c0c"])}${grad("redL", ["#ff837a", "#ec3a30", "#b01812"])}${grad("redHole", ["#a01010", "#ff7a74"])}
        ${grad("tan", ["#c8ac68", "#d8c488", "#7c6430"])}${grad("bed", ["#3a3a3a", "#555", "#666"])}${grad("bedside", ["#b404b4", "#a004a0", "#900890"], 0, 1)}${grad("bedrail", ["#e404e4", "#d804d8", "#a804a8"], 0, 1)}
        ${grad("rdoor", ["#c89490", "#a67c78", "#9a7470", "#7c5c5a"], 0, 1)}${grad("fdoor", ["#94264e", "#7e2044", "#7c1e42"], 0, 1)}${grad("glass", ["#747270", "#686664", "#a4a4a2"])}
        ${grad("tyreBrown", ["#6a4010", "#85521e", "#a87440", "#6a4418"], 0, 1)}${grad("tyrePurple", ["#6a1c70", "#a040a8", "#7a2080", "#6a1c70"], 0, 1)}${grad("corner", ["#584080", "#3a2850", "#5a4488"], 1, 0)}${grad("lamp", ["#8a8a88", "#5c5c5a"], 1, 0)}
        <radialGradient id="sphere" cx=".35" cy=".3" r=".75"><stop offset="0" stop-color="#fff"/><stop offset=".6" stop-color="#b0b0b0"/><stop offset="1" stop-color="#555"/></radialGradient>
      </defs></svg>

      <header class="title">
        <svg width="12" height="16" viewBox="0 0 12 16"><path d="M0 1L4 0L5 6H7L8 0L12 1L10 8L12 15L8 16L7 10H5L4 16L0 15L2 8Z" fill="#f2643c"/></svg>
        <h1>silverado.hm - Altair HyperMesh 2024.1 - LsDyna (Keyword971_R13.1)</h1>
        <div class="win">
          <button aria-label="Minimize"><svg width="10" height="10" viewBox="0 0 10 10"><path d="M0 5.500H10" stroke="#111"/></svg></button>
          <button aria-label="Restore"><svg width="11" height="11" viewBox="0 0 11 11"><path d="M.5 2.500H8.500V10.500H.5ZM2.500 .5H9Q10.500 .5 10.500 2V8.500" fill="none" stroke="#111"/></svg></button>
          <button aria-label="Close">${this.cross("#111", 10)}</button>
        </div>
      </header>

      <div class="menubar">
        <nav>
          ${menus.map((m) => html`<button class=${classMap({ on: m === this.menu })} @click=${() => (this.menu = m)}>${m}</button>`)}
          <button aria-label="Add ribbon"><svg width="12" height="14" viewBox="0 0 12 14"><path d="M6 1V13M0 7H12" stroke="#707070" stroke-width="2"/></svg></button>
        </nav>
        <div class="right">
          <button class="chat" aria-label="Assistant"><svg width="16" height="16" viewBox="0 0 16 16"><circle cx="8" cy="8" r="8" fill="#1090c0"/><path d="M4 11.500L5 9.800Q3.500 8 5 6Q8 3.500 11 6Q13 8.500 10.500 10.500Q8 12 6 11Z" fill="none" stroke="#fff" stroke-width="1.100"/></svg></button>
          <button class="find" aria-label="Find"><svg width="14" height="14" viewBox="0 0 14 14"><circle cx="5.500" cy="5.500" r="4" fill="none" stroke="#eee" stroke-width="1.500"/><path d="M8.500 8.500L13 13" stroke="#eee" stroke-width="2"/></svg></button>
          <button class="doc">Untitled <svg width="8" height="5" viewBox="0 0 8 5"><path d="M0 0H8L4 5Z" fill="#eee"/></svg></button>
          <button class="sq" aria-label="Page layout"><svg width="14" height="14" viewBox="0 0 14 14"><rect x=".5" y=".5" width="12" height="12" fill="none" stroke="#ccc"/></svg></button>
          <button class="share" aria-label="Add page"><svg width="15" height="14" viewBox="0 0 15 14"><path d="M5 1.500H1.500V13.500H13.500V10M9 0L6 3L9 6M7 3Q13 2 13 6Q12 9 9 8.500" fill="none" stroke="#bbb" stroke-width="1.100"/></svg></button>
          <button aria-label="Previous page"><svg width="4" height="7" viewBox="0 0 4 7"><path d="M4 0V7L0 3.500Z" fill="#888"/></svg></button>
          <span class="pages">1 of 1</span>
          <button aria-label="Next page"><svg width="4" height="7" viewBox="0 0 4 7"><path d="M0 0V7L4 3.500Z" fill="#888"/></svg></button>
        </div>
      </div>

      <div class="ribbon">
        <section class="group first"><div class="rowed"><div class="tools">${home.map((t) => this.tool(t))}</div><div class="more"><svg width="7" height="6" viewBox="0 0 7 6"><path d="M0 0H7L3.500 6Z" fill="#8a8a8a"/></svg></div></div><div class="cap">Home</div></section>
        <section class="group second"><div class="tools">${setup.map((t) => this.tool(t))}</div><div class="cap">Setup</div></section>
        <section class="group"><div class="tools">${create.map((t) => this.tool(t))}</div><div class="cap">Create ${this.down("#808080")}</div></section>
        <section class="group last"><div class="tools">${edit.map((t) => this.tool(t))}</div><div class="cap">Edit ${this.down("#555")}</div></section>
      </div>

      <div class="work">
        <aside class="side">
          <div class="tabs">
            <button class="tab"><svg width="60" height="20" viewBox="0 0 60 20"><path d="M58 19.500H.5V.5H44L57 19.500" fill="none" stroke="#999"/></svg><span>Session</span></button>
            <button class="tab on"><svg width="50" height="21" viewBox="0 0 50 21"><path d="M1.500 21V0H37L49.500 21Z" fill="#333"/><path d="M1.500 20.500V0M37 2L49.500 20.500" fill="none" stroke="#999"/><path d="M1 1.500H38" stroke="#007aa8" stroke-width="3"/></svg><span>Model</span></button>
            <div class="rule"></div>
          </div>
          <div class="closeRow"><button aria-label="Close browser">${this.cross("#ccc")}</button></div>
          <div class="search"><input type="text" placeholder="Search" aria-label="Search" /><svg width="12" height="12" viewBox="0 0 12 12"><circle cx="5" cy="5" r="4.300" fill="none" stroke="#bbb" stroke-width="1.200"/><path d="M8 8L11.500 11.500" stroke="#bbb" stroke-width="1.500"/></svg></div>
          <div class="tree">
            <div class="thead"><span>Name</span><svg width="6" height="4" viewBox="0 0 6 4"><path d="M0 4H6L3 0Z" fill="#9cd0e8"/></svg></div>
            <ul>${rows.map(([name, n, exp, art]) => html`<li>
              ${exp ? html`<button class="exp" aria-label="Expand ${name}"><svg width="4" height="6" viewBox="0 0 4 6"><path d="M0 0V6L3.500 3Z" fill="#999"/></svg></button>` : html`<span class="exp"></span>`}
              <svg width="16" height="16" viewBox="0 0 48 48" aria-hidden="true">${art}</svg><b>${name}</b><span class="count">(${n})</span></li>`)}</ul>
          </div>
        </aside>

        <main class="main">
          <section class="view">
            <div class="sel">
              <button class="all"><svg width="9" height="12" viewBox="0 0 9 12"><path d="M6 0L0 7H4L1 12L9 4.500H5L8 0Z" fill="#d0ecf4"/></svg>All<svg width="8" height="6" viewBox="0 0 8 6"><path d="M1 1L4 4L7 1" fill="none" stroke="#fff" stroke-width="2"/></svg></button>
              <button class="sm" aria-label="More"><svg width="11" height="3" viewBox="0 0 11 3"><path d="M0 0H2V2H0ZM4 0H6V2H4ZM8 0H10V2H8Z" fill="#999"/></svg></button>
              <button class="sm" aria-label="Reset"><svg width="8" height="8" viewBox="0 0 8 8"><path d="M.5 0V8M7.500 .5L3 4L7.500 7.500Z" fill="none" stroke="#777"/></svg></button>
            </div>
            <svg class="scene" viewBox="303 199 1616 544" role="img" aria-label="Pickup truck model">${truck}${gizmo}</svg>
            <div class="bar">${viewTools.map(([name, art], i) => html`<button aria-label=${name}><svg width="38" height="34" viewBox=${`${34 + i * 106.4} 430 106.4 102`} preserveAspectRatio="none">${art}</svg></button>`)}</div>
          </section>

          <section class="log">
            <button class="x" aria-label="Close messages">${this.cross("#ccc")}</button>
            <div class="filter"><label>Filter:</label>
              <button><svg width="16" height="16" viewBox="0 0 16 16"><circle cx="8" cy="8" r="8" fill="#c8401c"/><path d="M5 4.500L11 11.500M11 4.500L5 11.500" stroke="#fff" stroke-width="2.600"/></svg>Error(0)</button>
              <button><svg width="16" height="16" viewBox="0 0 16 16"><path d="M8 1L16 15H0Z" fill="#f8c818" stroke="#b8860b" stroke-width=".6"/><path d="M8 6V10.500M8 12V13.500" stroke="#4a3a00" stroke-width="1.600"/></svg>Warning(0)</button>
              <button><svg width="16" height="16" viewBox="0 0 16 16"><circle cx="8" cy="7.500" r="7.500" fill="#dfe6f2"/><path d="M11 13L15 16L13 10Z" fill="#dfe6f2"/><path d="M9 2.500L8.800 4.500M8.500 6L7 12" stroke="#2040e0" stroke-width="2.400"/></svg>Info(0)</button>
            </div>
            <div class="grid"><table><thead><tr><th class="time">Time</th><th class="gap"></th><th class="prod">Product</th><th>Message</th></tr></thead></table></div>
          </section>
        </main>
      </div>

      <footer class="status">
        <span class="item"><svg width="16" height="16" viewBox="0 0 48 48">${cube(2, 2, 44)}</svg>ConNodRB.1 [1462]</span>
        <svg class="fire" width="16" height="14" viewBox="0 0 48 42"><path d="M2 14L10 24L40 12L46 18L38 38L8 42Z" fill="#a88840"/><path d="M8 24L6 10L14 16L18 4L22 14L30 2L32 12L40 4L38 18L14 28Z" fill="#e03020"/><path d="M12 30L40 18" stroke="#f0a030" stroke-width="3"/></svg>
        <button class="snap" aria-label="Snap"><svg width="15" height="15" viewBox="0 0 15 15"><path d="M4 4H11V11H4ZM7.500 0V4M7.500 11V15M0 7.500H4M11 7.500H15" fill="none" stroke="#aaa" stroke-width="1.600"/></svg></button>
      </footer>
    `;
  }
}
